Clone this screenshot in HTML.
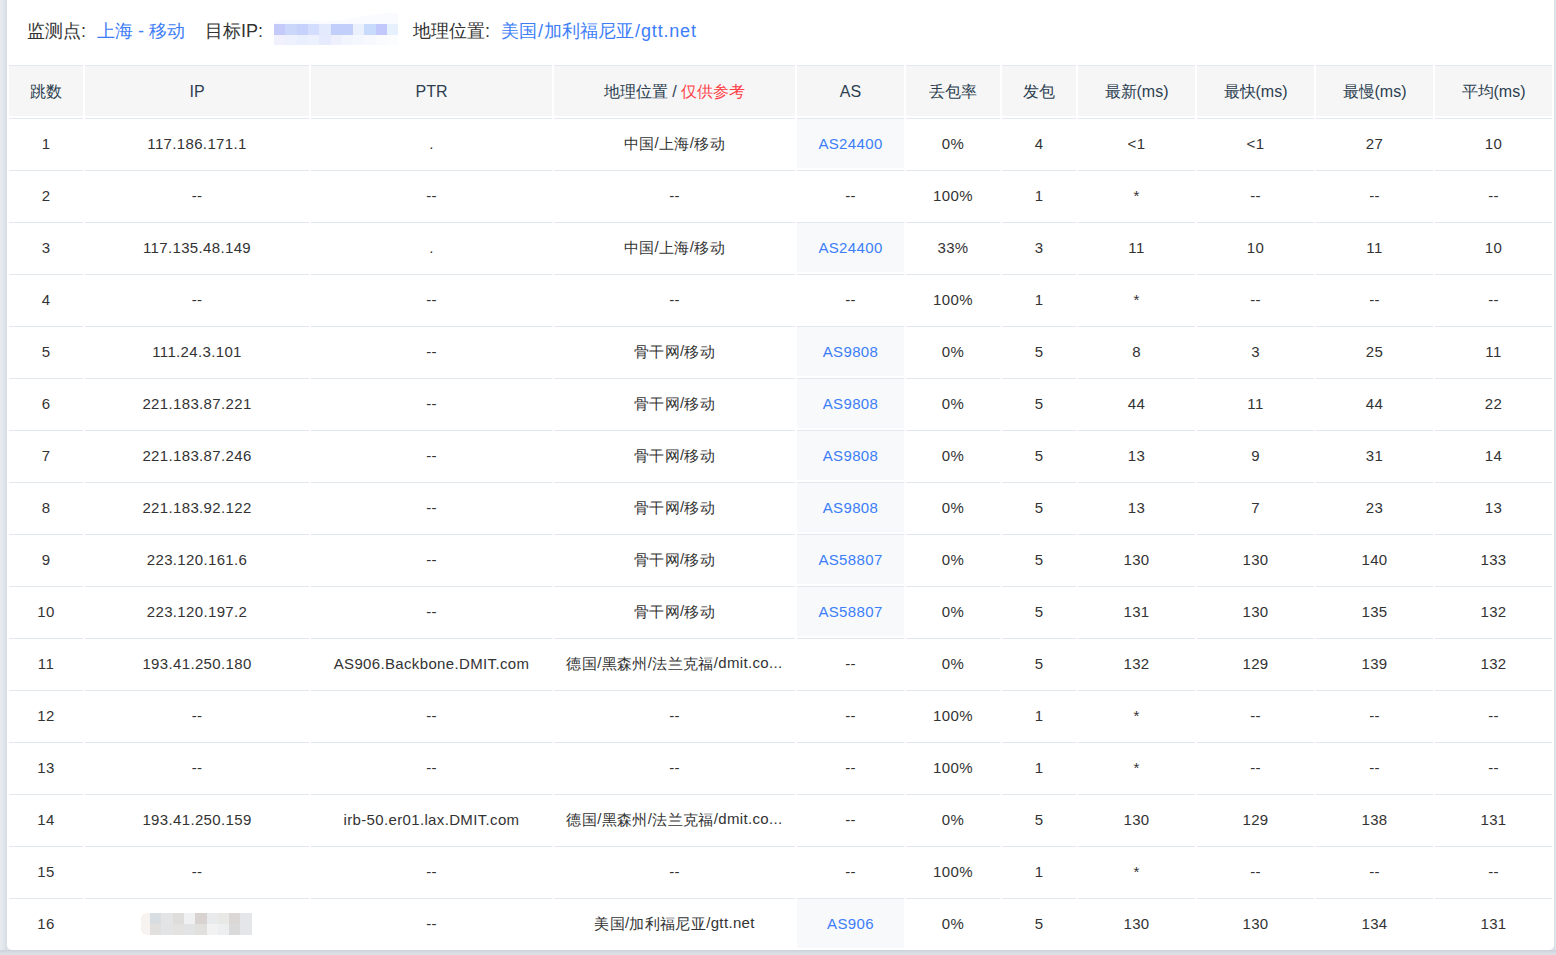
<!DOCTYPE html><html><head><meta charset="utf-8"><style>
*{margin:0;padding:0;box-sizing:border-box}
html,body{width:1556px;height:955px;overflow:hidden}
body{background:#dde2e9;font-family:"Liberation Sans",sans-serif;position:relative}
.lbar{position:absolute;left:0;top:0;width:7px;height:955px;background:linear-gradient(90deg,#e8ecf0 0%,#e1e6ec 50%,#d6dce4 100%)}
.rbar{position:absolute;right:0;top:0;width:2px;height:955px;background:linear-gradient(90deg,#d6dce4,#e3e7ed)}
.bbar{position:absolute;left:0;top:950px;width:1556px;height:5px;background:linear-gradient(180deg,#ccd3dc 0%,#d5dae1 40%,#dde1e9 100%)}
.card{position:absolute;left:7px;top:-10px;width:1547px;height:960px;background:#fff;border-radius:0 0 5px 5px;overflow:hidden}
.title{position:absolute;left:20px;top:21px;height:40px;font-size:18px;line-height:40px;color:#333;white-space:nowrap}
.title .blue{color:#3d7ef8}
.title span{display:inline-block;vertical-align:top}
.blurip{position:absolute;left:267px;top:23px}
.title .sl{margin:0 1px}
.title .lat{letter-spacing:0.8px}
table{position:absolute;left:0;top:73px;width:1547px;border-collapse:separate;border-spacing:2px;table-layout:fixed}
th,td{text-align:center;border-top:1px solid #e3e8ee;white-space:nowrap;overflow:hidden;padding:0 10px}
th{height:51px;padding-top:2px;background:#f6f6f6;font-weight:normal;font-size:16px;color:#2c3e50}
td{height:50px;font-size:15px;color:#333;letter-spacing:0.35px}

.red{color:#ff3f48}
i.c{font-style:normal;position:relative;top:1px}
th i.c{top:0}
td.as{background:#f7f9fb}
td.as a{color:#3d7ef8;text-decoration:none}
.blurrow{display:inline-block;vertical-align:middle;position:relative;left:-1px}
</style></head><body>
<div class="lbar"></div><div class="rbar"></div><div class="bbar"></div>
<div class="card">
<div class="title">监测点: <span class="blue" style="margin-left:6px">上海 - 移动</span>&nbsp;&nbsp;&nbsp; 目标IP: </div>
<svg shape-rendering="crispEdges" class="blurip" width="126" height="34" viewBox="0 0 126 34"><path d="M0 8 Q20 5 40 8 Q60 10 80 5 Q100 0 124 0 L124 11 L0 11 Z" fill="#fafbfe"/><rect x="0.0" y="11" width="11.4" height="11" fill="#c4cbfb"/><rect x="11.3" y="11" width="11.4" height="11" fill="#cbd6fb"/><rect x="22.6" y="11" width="11.4" height="11" fill="#c6d1fc"/><rect x="33.9" y="11" width="11.4" height="11" fill="#d3ddfd"/><rect x="45.2" y="11" width="11.4" height="11" fill="#e4eafd"/><rect x="56.5" y="11" width="11.4" height="11" fill="#c2cffb"/><rect x="67.8" y="11" width="11.4" height="11" fill="#c2cffb"/><rect x="79.1" y="11" width="11.4" height="11" fill="#ebf0fd"/><rect x="90.4" y="11" width="11.4" height="11" fill="#c9dbfd"/><rect x="101.7" y="11" width="11.4" height="11" fill="#c2c8fb"/><rect x="113.0" y="11" width="11.4" height="11" fill="#e6f1fd"/><rect x="0.0" y="22" width="11.4" height="10" fill="#f0f1fd"/><rect x="11.3" y="22" width="11.4" height="10" fill="#edf0fd"/><rect x="22.6" y="22" width="11.4" height="10" fill="#eaeffd"/><rect x="33.9" y="22" width="11.4" height="10" fill="#edf1fd"/><rect x="45.2" y="22" width="11.4" height="10" fill="#e5eafd"/><rect x="56.5" y="22" width="11.4" height="10" fill="#eef1fd"/><rect x="67.8" y="22" width="11.4" height="10" fill="#f3f5fe"/><rect x="79.1" y="22" width="11.4" height="10" fill="#f5f7fe"/><rect x="90.4" y="22" width="11.4" height="10" fill="#f8f9fe"/><rect x="101.7" y="22" width="11.4" height="10" fill="#fafbfe"/><rect x="113.0" y="22" width="11.4" height="10" fill="#fbfcfe"/></svg>
<div class="title" style="left:406px">地理位置: <span class="blue" style="margin-left:6px">美国<span class="sl">/</span>加利福尼亚<span class="sl">/</span><span class="lat">gtt.net</span></span></div>
<table><colgroup><col style="width:74px"><col style="width:224px"><col style="width:241px"><col style="width:241px"><col style="width:107px"><col style="width:94px"><col style="width:74px"><col style="width:117px"><col style="width:117px"><col style="width:117px"><col style="width:117px"></colgroup>
<thead><tr><th><i class="c">跳数</i></th><th>IP</th><th>PTR</th><th><i class="c">地理位置</i> / <span class="red"><i class="c">仅供参考</i></span></th><th>AS</th><th><i class="c">丢包率</i></th><th><i class="c">发包</i></th><th><i class="c">最新</i>(ms)</th><th><i class="c">最快</i>(ms)</th><th><i class="c">最慢</i>(ms)</th><th><i class="c">平均</i>(ms)</th></tr></thead><tbody>
<tr><td>1</td><td>117.186.171.1</td><td>.</td><td><i class="c">中国</i>/<i class="c">上海</i>/<i class="c">移动</i></td><td class="as"><a>AS24400</a></td><td>0%</td><td>4</td><td>&lt;1</td><td>&lt;1</td><td>27</td><td>10</td></tr>
<tr><td>2</td><td>--</td><td>--</td><td>--</td><td>--</td><td>100%</td><td>1</td><td>*</td><td>--</td><td>--</td><td>--</td></tr>
<tr><td>3</td><td>117.135.48.149</td><td>.</td><td><i class="c">中国</i>/<i class="c">上海</i>/<i class="c">移动</i></td><td class="as"><a>AS24400</a></td><td>33%</td><td>3</td><td>11</td><td>10</td><td>11</td><td>10</td></tr>
<tr><td>4</td><td>--</td><td>--</td><td>--</td><td>--</td><td>100%</td><td>1</td><td>*</td><td>--</td><td>--</td><td>--</td></tr>
<tr><td>5</td><td>111.24.3.101</td><td>--</td><td><i class="c">骨干网</i>/<i class="c">移动</i></td><td class="as"><a>AS9808</a></td><td>0%</td><td>5</td><td>8</td><td>3</td><td>25</td><td>11</td></tr>
<tr><td>6</td><td>221.183.87.221</td><td>--</td><td><i class="c">骨干网</i>/<i class="c">移动</i></td><td class="as"><a>AS9808</a></td><td>0%</td><td>5</td><td>44</td><td>11</td><td>44</td><td>22</td></tr>
<tr><td>7</td><td>221.183.87.246</td><td>--</td><td><i class="c">骨干网</i>/<i class="c">移动</i></td><td class="as"><a>AS9808</a></td><td>0%</td><td>5</td><td>13</td><td>9</td><td>31</td><td>14</td></tr>
<tr><td>8</td><td>221.183.92.122</td><td>--</td><td><i class="c">骨干网</i>/<i class="c">移动</i></td><td class="as"><a>AS9808</a></td><td>0%</td><td>5</td><td>13</td><td>7</td><td>23</td><td>13</td></tr>
<tr><td>9</td><td>223.120.161.6</td><td>--</td><td><i class="c">骨干网</i>/<i class="c">移动</i></td><td class="as"><a>AS58807</a></td><td>0%</td><td>5</td><td>130</td><td>130</td><td>140</td><td>133</td></tr>
<tr><td>10</td><td>223.120.197.2</td><td>--</td><td><i class="c">骨干网</i>/<i class="c">移动</i></td><td class="as"><a>AS58807</a></td><td>0%</td><td>5</td><td>131</td><td>130</td><td>135</td><td>132</td></tr>
<tr><td>11</td><td>193.41.250.180</td><td>AS906.Backbone.DMIT.com</td><td><i class="c">德国</i>/<i class="c">黑森州</i>/<i class="c">法兰克福</i>/dmit.co...</td><td>--</td><td>0%</td><td>5</td><td>132</td><td>129</td><td>139</td><td>132</td></tr>
<tr><td>12</td><td>--</td><td>--</td><td>--</td><td>--</td><td>100%</td><td>1</td><td>*</td><td>--</td><td>--</td><td>--</td></tr>
<tr><td>13</td><td>--</td><td>--</td><td>--</td><td>--</td><td>100%</td><td>1</td><td>*</td><td>--</td><td>--</td><td>--</td></tr>
<tr><td>14</td><td>193.41.250.159</td><td>irb-50.er01.lax.DMIT.com</td><td><i class="c">德国</i>/<i class="c">黑森州</i>/<i class="c">法兰克福</i>/dmit.co...</td><td>--</td><td>0%</td><td>5</td><td>130</td><td>129</td><td>138</td><td>131</td></tr>
<tr><td>15</td><td>--</td><td>--</td><td>--</td><td>--</td><td>100%</td><td>1</td><td>*</td><td>--</td><td>--</td><td>--</td></tr>
<tr><td>16</td><td><svg shape-rendering="crispEdges" class="blurrow" width="111" height="22" viewBox="0 0 111 22"><rect x="0" y="0" width="14" height="22" rx="6" fill="#f6f3f1"/><rect x="9.0" y="0" width="11.4" height="11" fill="#d8dde2"/><rect x="20.3" y="0" width="11.4" height="11" fill="#e3e4e6"/><rect x="31.6" y="0" width="11.4" height="11" fill="#dfdddc"/><rect x="42.9" y="0" width="11.4" height="11" fill="#f0f1f3"/><rect x="54.2" y="0" width="11.4" height="11" fill="#d8d3d0"/><rect x="65.5" y="0" width="11.4" height="11" fill="#e8eaeb"/><rect x="76.8" y="0" width="11.4" height="11" fill="#e8e9e7"/><rect x="88.1" y="0" width="11.4" height="11" fill="#dad7d5"/><rect x="99.4" y="0" width="11.4" height="11" fill="#e5e6e9"/><rect x="9.0" y="11" width="11.4" height="11" fill="#e1e0de"/><rect x="20.3" y="11" width="11.4" height="11" fill="#e3e4e6"/><rect x="31.6" y="11" width="11.4" height="11" fill="#e4e2e0"/><rect x="42.9" y="11" width="11.4" height="11" fill="#e2e3e5"/><rect x="54.2" y="11" width="11.4" height="11" fill="#e2e0dd"/><rect x="65.5" y="11" width="11.4" height="11" fill="#f1f2f1"/><rect x="76.8" y="11" width="11.4" height="11" fill="#eceef0"/><rect x="88.1" y="11" width="11.4" height="11" fill="#dadada"/><rect x="99.4" y="11" width="11.4" height="11" fill="#e5e6e9"/></svg></td><td>--</td><td><i class="c">美国</i>/<i class="c">加利福尼亚</i>/gtt.net</td><td class="as"><a>AS906</a></td><td>0%</td><td>5</td><td>130</td><td>130</td><td>134</td><td>131</td></tr>
</tbody></table></div></body></html>
